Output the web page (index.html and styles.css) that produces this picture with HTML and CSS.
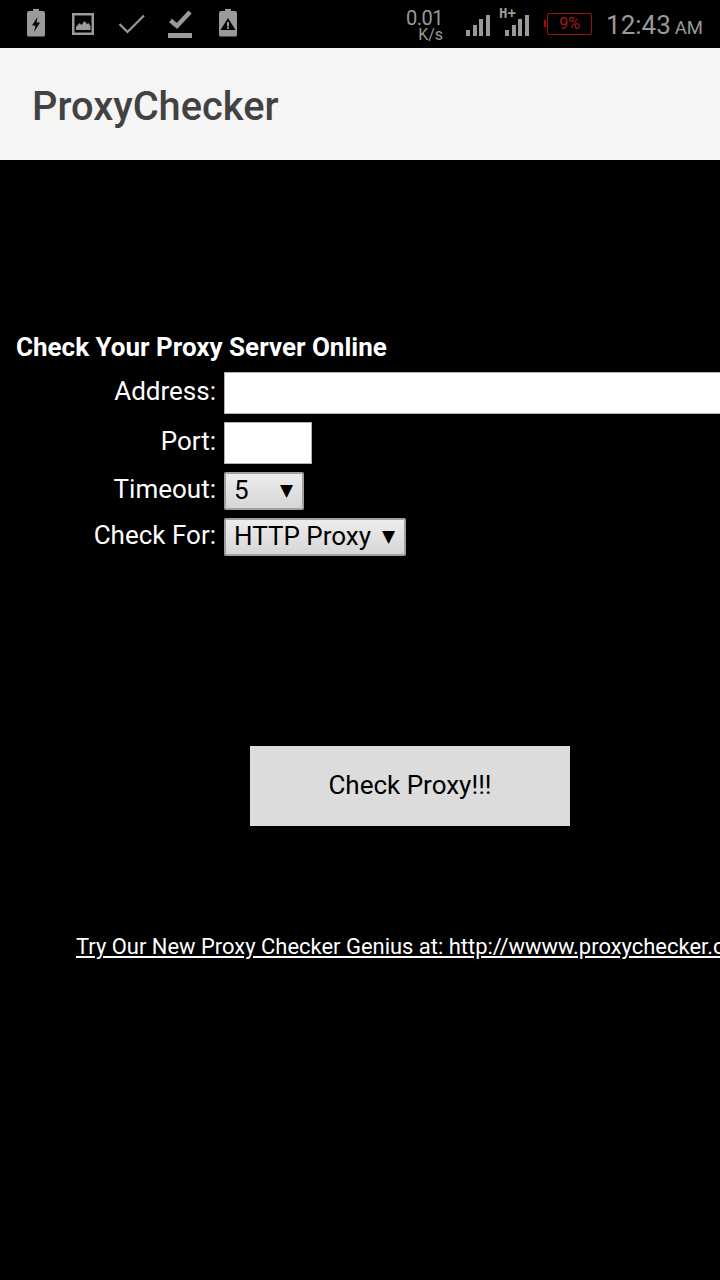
FILE: index.html
```html
<!DOCTYPE html>
<html>
<head>
    <meta charset="UTF-8">
    <title>ProxyChecker</title>
    <link rel="stylesheet" href="styles.css">
</head>
<body>
    <div class="status_bar">
        <div class="status_left">
            <svg class="ic ic_charge" width="20" height="30" viewBox="0 1 20 30"><path fill="#9a9a9a" d="M7 1h6v2h4a2 2 0 0 1 2 2v22a1.500 1.500 0 0 1-1.500 1.500h-15a1.500 1.500 0 0 1-1.500-1.500V5a2 2 0 0 1 2-2h4z"/><path fill="#000" d="M11.500 9 6 17.500h3.500L8 24l6-9.500h-3.500z"/></svg>
            <svg class="ic ic_image" width="24" height="24" viewBox="0 0 24 24"><path fill="#9a9a9a" fill-rule="evenodd" d="M1 1h22v22H1zM3.500 3.500v17h17v-17z"/><path fill="#9a9a9a" d="M5 18v-3l3.500-4 2 2 3-4 2.500 3 1.500-1 2 3v4z"/></svg>
            <svg class="ic ic_check" width="28" height="20" viewBox="0 0 28 20"><path fill="none" stroke="#9a9a9a" stroke-width="2.200" d="M1.500 10l8 8L26 1.500"/></svg>
            <svg class="ic ic_done" width="24" height="30" viewBox="0 0 24 30"><path fill="none" stroke="#9a9a9a" stroke-width="4.500" d="M2.500 11.500l6.500 5.500L22 3"/><path fill="#9a9a9a" d="M0 24h24v5H0z"/></svg>
            <svg class="ic ic_alert" width="20" height="30" viewBox="0 1 20 30"><path fill="#9a9a9a" d="M7 1h6v2h4a2 2 0 0 1 2 2v22a1.500 1.500 0 0 1-1.500 1.500h-15a1.500 1.500 0 0 1-1.500-1.500V5a2 2 0 0 1 2-2h4z"/><path fill="#000" d="M10 10 2.500 22h15z"/><path fill="#9a9a9a" d="M9 14h2v4.500H9zM9 19.300h2v1.700H9z"/></svg>
        </div>
        <div class="status_right">
            <div class="speed">0.01<span>K/s</span></div>
            <div class="signal"><i class="b1"></i><i class="b2"></i><i class="b3"></i><i class="b4"></i></div>
            <div class="signal sim2">
                <b>H+</b>
                <i class="b1"></i><i class="b2"></i><i class="b3"></i><i class="b4"></i>
            </div>
            <div class="battery"><i></i><span>9%</span></div>
            <div class="clock">12:43<span>AM</span></div>
        </div>
    </div>

    <div class="app_bar">ProxyChecker</div>

    <div class="content">
        <h1>Check Your Proxy Server Online</h1>
        <div class="proxy_form">
            <label>Address:</label>
            <input class="field field_address" type="text">
            <label>Port:</label>
            <input class="field field_port" type="text">
            <label>Timeout:</label>
            <div class="sel sel_timeout"><span>5</span><em>▼</em></div>
            <label>Check For:</label>
            <div class="sel sel_type"><span>HTTP Proxy</span><em>▼</em></div>
        </div>
        <div class="btn_row"><button class="check_btn">Check Proxy!!!</button></div>
        <a class="genius_link" href="#">Try Our New Proxy Checker Genius at: http://wwww.proxychecker.com</a>
    </div>
</body>
</html>
```

FILE: styles.css
```css
html,body{
    margin:0;
    height:1280px;
    overflow:hidden;
    background:#000;
}
body{
    font-family:Roboto,"Liberation Sans",sans-serif;
    color:#fff;
}

/* status bar */
.status_bar{
    height:48px;
    display:flex;
    justify-content:space-between;
    align-items:center;
    color:#9a9a9a;
}
.status_left{
    display:flex;
    align-items:center;
    padding-left:26px;
}
.status_left .ic{
    display:block;
}
.ic_image{margin-left:25px;}
.ic_check{margin-left:23px;}
.ic_done{margin-left:22px;}
.ic_alert{margin-left:26px;}
.status_right{
    display:flex;
    align-items:center;
    padding-right:17px;
}
.speed{
    width:50px;
    font-size:20px;
    line-height:20px;
    letter-spacing:-.5px;
    text-align:right;
    margin-top:2px;
}
.speed span{
    display:block;
    font-size:16px;
    line-height:14px;
    letter-spacing:0;
}
.signal{
    position:relative;
    display:flex;
    align-items:flex-end;
    gap:2.67px;
    height:22px;
    margin-left:23px;
    margin-top:2px;
}
.signal.sim2{
    margin-left:15px;
}
.signal i{
    display:block;
    width:4px;
    background:#9a9a9a;
}
.signal .b1{height:6px;}
.signal .b2{height:11px;}
.signal .b3{height:17px;}
.signal .b4{height:21px;}
.signal b{
    position:absolute;
    left:-6px;
    top:-9px;
    font-size:14px;
    line-height:16px;
    font-weight:700;
    font-family:"DejaVu Sans Mono",monospace;
}
.battery{
    position:relative;
    width:43px;
    height:20px;
    margin-left:18px;
    border:1px solid #a01010;
    border-radius:2px;
    color:#a81818;
    font-size:16px;
    line-height:20px;
    text-align:center;
}
.battery i{
    position:absolute;
    left:-4px;
    top:6px;
    width:2px;
    height:7px;
    background:#a01010;
}
.clock{
    margin-left:14px;
    margin-top:2px;
    font-size:26px;
}
.clock span{
    font-size:18.500px;
    margin-left:4px;
}

/* app bar */
.app_bar{
    height:112px;
    line-height:118px;
    padding-left:32px;
    background:#f5f5f5;
    color:#424242;
    font-size:39.800px;
    font-weight:500;
}

/* form */
.content{
    padding-top:170px;
}
.content h1{
    margin:0 0 8px 16px;
    font-size:26px;
    line-height:34px;
    font-weight:700;
}
.proxy_form{
    display:grid;
    grid-template-columns:216px 1fr;
    column-gap:8px;
    row-gap:8px;
    align-items:center;
    justify-items:start;
}
.proxy_form label{
    justify-self:end;
    font-size:26px;
    line-height:36px;
    margin-top:-4px;
}
.field{
    box-sizing:border-box;
    display:block;
    height:42px;
    margin:0;
    padding:0;
    border:1px solid #b0b0b0;
    border-radius:0;
    background:#fff;
}
.field_address{
    width:520px;
}
.field_port{
    width:88px;
}
.sel{
    box-sizing:border-box;
    display:flex;
    justify-content:space-between;
    align-items:center;
    height:38px;
    padding:0 9px 2px 8px;
    border:2px solid #a0a0a0;
    border-radius:2px;
    background:linear-gradient(#ededed,#d6d6d6);
    color:#000;
    font-size:26px;
}
.sel em{
    font-style:normal;
    font-size:17px;
    font-family:"DejaVu Sans",sans-serif;
}
.sel_timeout{
    width:80px;
}
.sel_type{
    width:182px;
}
.btn_row{
    display:flex;
    justify-content:center;
    padding:190px 0 0 100px;
}
.check_btn{
    width:320px;
    height:80px;
    padding:0 0 2px;
    border:0;
    border-radius:0;
    background:#dcdcdc;
    color:#000;
    font-family:inherit;
    font-size:26px;
}
.genius_link{
    display:block;
    margin:104px 0 0 76px;
    width:700px;
    white-space:nowrap;
    color:#fff;
    font-size:21.950px;
    line-height:34px;
}
```
